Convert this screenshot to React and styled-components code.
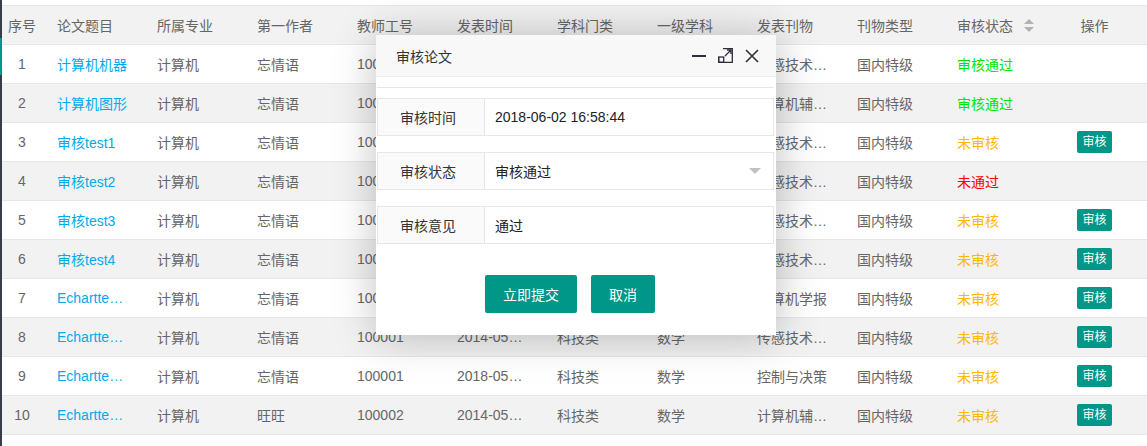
import styled, { createGlobalStyle } from "styled-components"

const GlobalStyle = createGlobalStyle`
    html, body {
        margin: 0;
        padding: 0;
        background: #fff;
        font-family: "Liberation Sans", "Noto Sans CJK SC", sans-serif;
        font-size: 14px;
        color: #666;
    }
`

const Page = styled.div`
    display: flex;
    width: 1147px;
    height: 446px;
    overflow: hidden;
    position: relative;
`

const SideEdge = styled.div`
    width: 2px;
    flex-shrink: 0;
    background: #393d49;
    padding-top: 38px;
`

const SideActive = styled.div`
    height: 37px;
    background: #009688;
`

const Main = styled.div`
    flex: 1;
    padding-top: 5px;
`

const Table = styled.table`
    width: 1145px;
    table-layout: fixed;
    border-collapse: separate;
    border-spacing: 0;
    border-top: 1px solid #e6e6e6;
`

const HeadRow = styled.tr`
    background: #f2f2f2;
`

const Row = styled.tr`
    background: ${p => (p.$even ? "#f2f2f2" : "#fff")};
`

const Cell = styled.td`
    height: 38px;
    padding: ${p => (p.$center ? "0" : "0 15px")};
    border-bottom: 1px solid #e6e6e6;
    text-align: ${p => (p.$center ? "center" : "left")};
    white-space: nowrap;
    overflow: ${p => (p.$visible ? "visible" : "hidden")};
    text-overflow: ellipsis;
    color: ${p => p.$color || "#666"};
    font-weight: normal;
`

const HeadCell = styled(Cell).attrs({ as: "th" })``

const HeadInner = styled.span`
    display: inline-flex;
    align-items: center;
    gap: 11px;
`

const SortIcon = styled.span`
    display: inline-flex;
    flex-direction: column;
    gap: 3px;

    &::before, &::after {
        content: "";
        width: 0;
        height: 0;
        border-left: 5px solid transparent;
        border-right: 5px solid transparent;
    }
    &::before {
        border-bottom: 5px solid #b2b2b2;
    }
    &::after {
        border-top: 5px solid #b2b2b2;
    }
`

const SmallBtn = styled.button`
    height: 22px;
    line-height: 22px;
    padding: 0 5px;
    border: none;
    border-radius: 2px;
    background: #009688;
    color: #fff;
    font-family: inherit;
    font-size: 12px;
    cursor: pointer;
    vertical-align: middle;
`

/* layer dialog */

const Dialog = styled.div`
    position: absolute;
    left: 376px;
    top: 35px;
    width: 400px;
    height: 300px;
    background: #fff;
    box-shadow: 1px 1px 40px rgba(0, 0, 0, 0.25);
    display: flex;
    flex-direction: column;
`

const DialogTitle = styled.div`
    height: 42px;
    box-sizing: border-box;
    display: flex;
    align-items: center;
    justify-content: space-between;
    padding: 0 17px 0 20px;
    background: #f8f8f8;
    border-bottom: 1px solid #eee;
    color: #333;
    font-size: 14px;
`

const TitleTools = styled.div`
    display: flex;
    align-items: center;
    gap: 12px;
    color: #2e2d3c;
`

const DialogBody = styled.div`
    padding: 0 2px 0 1px;
`

const TopStrip = styled.div`
    height: 10px;
    border-bottom: 1px solid #e6e6e6;
    margin-bottom: 10px;
`

const FormItem = styled.div`
    display: flex;
    height: 38px;
    box-sizing: border-box;
    border: 1px solid #e6e6e6;
    margin-bottom: 16px;
`

const Label = styled.div`
    width: 107px;
    flex-shrink: 0;
    box-sizing: border-box;
    border-right: 1px solid #e6e6e6;
    background: #fafafa;
    color: #333;
    display: flex;
    align-items: center;
    justify-content: center;
    padding-right: 6px;
`

const InputBox = styled.div`
    flex: 1;
    display: flex;
    align-items: center;
    justify-content: space-between;
    padding: 0 12px 0 10px;
    color: #222;
`

const Caret = styled.span`
    width: 0;
    height: 0;
    border-left: 6px solid transparent;
    border-right: 6px solid transparent;
    border-top: 6px solid #c2c2c2;
`

const ButtonRow = styled.div`
    display: flex;
    gap: 14px;
    padding-left: 108px;
    margin-top: 31px;
`

const Button = styled.button`
    height: 38px;
    padding: 0 18px;
    border: none;
    border-radius: 2px;
    background: #009688;
    color: #fff;
    font-family: inherit;
    font-size: 14px;
`

const statusColor = {
    "审核通过": "#00e600",
    "未审核": "#ffb800",
    "未通过": "#ff0000",
}

const rows = [
    { no: 1, title: "计算机机器", teacher: "忘情语", id: "100001", date: "2018-05-30", pub: "传感技术学报", status: "审核通过" },
    { no: 2, title: "计算机图形", teacher: "忘情语", id: "100001", date: "2018-05-30", pub: "计算机辅助设计", status: "审核通过" },
    { no: 3, title: "审核test1", teacher: "忘情语", id: "100001", date: "2018-05-31", pub: "传感技术学报", status: "未审核", btn: true },
    { no: 4, title: "审核test2", teacher: "忘情语", id: "100001", date: "2018-05-31", pub: "传感技术学报", status: "未通过" },
    { no: 5, title: "审核test3", teacher: "忘情语", id: "100001", date: "2018-05-31", pub: "传感技术学报", status: "未审核", btn: true },
    { no: 6, title: "审核test4", teacher: "忘情语", id: "100001", date: "2018-05-31", pub: "传感技术学报", status: "未审核", btn: true },
    { no: 7, title: "Echarttest1", teacher: "忘情语", id: "100001", date: "2014-05-12", pub: "计算机学报", status: "未审核", btn: true },
    { no: 8, title: "Echarttest2", teacher: "忘情语", id: "100001", date: "2014-05-12", pub: "传感技术学报", status: "未审核", btn: true },
    { no: 9, title: "Echarttest3", teacher: "忘情语", id: "100001", date: "2018-05-12", pub: "控制与决策", status: "未审核", btn: true },
    { no: 10, title: "Echarttest4", teacher: "旺旺", id: "100002", date: "2014-05-12", pub: "计算机辅助设计", status: "未审核", btn: true },
]

const headers = ["论文题目", "所属专业", "第一作者", "教师工号", "发表时间", "学科门类", "一级学科", "发表刊物", "刊物类型"]

const MinIcon = () => (
    <svg width="14" height="14" viewBox="0 0 14 14">
        <rect x="0" y="6" width="14" height="2" fill="currentColor" />
    </svg>
)

const MaxIcon = () => (
    <svg width="15" height="15" viewBox="0 0 15 15" fill="none" stroke="currentColor" strokeWidth="1.3">
        <path d="M5 0.7 H14.3 V14.3 H0.7 V9" />
        <rect x="0.7" y="9" width="5" height="5.3" />
        <path d="M7 8 L13 2 M9 2 H13 V6" />
    </svg>
)

const CloseIcon = () => (
    <svg width="14" height="14" viewBox="0 0 14 14" stroke="currentColor" strokeWidth="1.6">
        <path d="M1 1 L13 13 M13 1 L1 13" />
    </svg>
)

const App = () => {
    return (
        <>
            <GlobalStyle />
            <Page>
                <SideEdge>
                    <SideActive />
                </SideEdge>
                <Main>
                    <Table>
                        <colgroup>
                            <col style={{ width: 40 }} />
                            {headers.map(h => <col key={h} style={{ width: 100 }} />)}
                            <col style={{ width: 100 }} />
                            <col style={{ width: 105 }} />
                        </colgroup>
                        <thead>
                            <HeadRow>
                                <HeadCell $center>序号</HeadCell>
                                {headers.map(h => <HeadCell key={h}>{h}</HeadCell>)}
                                <HeadCell $visible>
                                    <HeadInner>审核状态<SortIcon /></HeadInner>
                                </HeadCell>
                                <HeadCell $center>操作</HeadCell>
                            </HeadRow>
                        </thead>
                        <tbody>
                            {rows.map((r, i) => (
                                <Row key={r.no} $even={i % 2 === 1}>
                                    <Cell $center>{r.no}</Cell>
                                    <Cell $color="#01aaed">{r.title}</Cell>
                                    <Cell>计算机</Cell>
                                    <Cell>{r.teacher}</Cell>
                                    <Cell>{r.id}</Cell>
                                    <Cell>{r.date}</Cell>
                                    <Cell>科技类</Cell>
                                    <Cell>数学</Cell>
                                    <Cell>{r.pub}</Cell>
                                    <Cell>国内特级</Cell>
                                    <Cell $color={statusColor[r.status]}>{r.status}</Cell>
                                    <Cell $center>
                                        {r.btn && <SmallBtn>审核</SmallBtn>}
                                    </Cell>
                                </Row>
                            ))}
                        </tbody>
                    </Table>
                </Main>

                <Dialog>
                    <DialogTitle>
                        审核论文
                        <TitleTools>
                            <MinIcon />
                            <MaxIcon />
                            <CloseIcon />
                        </TitleTools>
                    </DialogTitle>
                    <DialogBody>
                        <TopStrip />
                        <FormItem>
                            <Label>审核时间</Label>
                            <InputBox>2018-06-02 16:58:44</InputBox>
                        </FormItem>
                        <FormItem>
                            <Label>审核状态</Label>
                            <InputBox>审核通过<Caret /></InputBox>
                        </FormItem>
                        <FormItem>
                            <Label>审核意见</Label>
                            <InputBox>通过</InputBox>
                        </FormItem>
                        <ButtonRow>
                            <Button>立即提交</Button>
                            <Button>取消</Button>
                        </ButtonRow>
                    </DialogBody>
                </Dialog>
            </Page>
        </>
    )
}

export default App
